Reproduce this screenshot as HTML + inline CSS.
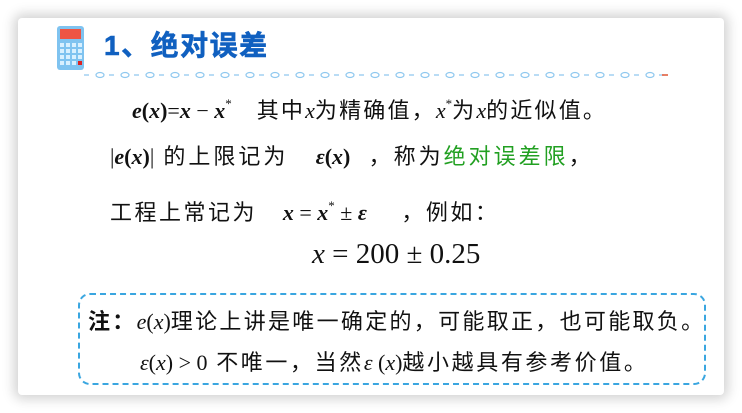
<!DOCTYPE html>
<html><head><meta charset="utf-8"><style>
body{margin:0;width:742px;height:413px;background:#fff;position:relative;overflow:hidden;font-family:"Liberation Sans","Noto Sans CJK SC",sans-serif;color:#111}
.card{position:absolute;left:18px;top:18px;width:706px;height:377px;background:#fff;border-radius:4px;box-shadow:0 0 12px 4px rgba(0,0,0,0.18)}
.a{position:absolute;white-space:nowrap;line-height:1}
.m{font-family:"Liberation Serif","Noto Serif CJK SC",serif;letter-spacing:0}
.mi{font-family:"Liberation Serif",serif;font-style:italic;letter-spacing:0}
.b{font-weight:bold}
sup{vertical-align:10px}
</style></head><body>
<div class="card"></div>
<svg class="a" style="left:56px;top:25px" width="30" height="46" viewBox="0 0 30 46">
<rect x="1" y="1" width="27" height="44" rx="3" fill="#7fc3f0"/>
<rect x="4" y="4" width="21" height="10" fill="#ee5544"/>
<g fill="#d8f0ff">
<rect x="4" y="18" width="4" height="4"/><rect x="10" y="18" width="4" height="4"/><rect x="16" y="18" width="4" height="4"/><rect x="22" y="18" width="4" height="4"/>
<rect x="4" y="24" width="4" height="4"/><rect x="10" y="24" width="4" height="4"/><rect x="16" y="24" width="4" height="4"/><rect x="22" y="24" width="4" height="4"/>
<rect x="4" y="30" width="4" height="4"/><rect x="10" y="30" width="4" height="4"/><rect x="16" y="30" width="4" height="4"/><rect x="22" y="30" width="4" height="4"/>
<rect x="4" y="36" width="4" height="4"/><rect x="10" y="36" width="4" height="4"/><rect x="16" y="36" width="4" height="4"/></g>
<rect x="22" y="36" width="4" height="4" fill="#dd2222"/>
</svg>
<div class="a b" style="left:104px;top:32px;font-size:28px;color:#1060c0;letter-spacing:1.5px;-webkit-text-stroke:0.6px #1060c0">1、绝对误差</div>
<svg class="a" style="left:84px;top:71px" width="586" height="8">
<g stroke="#8fc8ef" stroke-width="1.2" fill="none">
<line x1="0" y1="4" x2="580" y2="4" stroke-dasharray="5 20"/>
</g>
<g fill="none" stroke="#8fc8ef" stroke-width="1.2">
<ellipse cx="16" cy="4" rx="4" ry="2.5"/><ellipse cx="41" cy="4" rx="4" ry="2.5"/><ellipse cx="66" cy="4" rx="4" ry="2.5"/><ellipse cx="91" cy="4" rx="4" ry="2.5"/><ellipse cx="116" cy="4" rx="4" ry="2.5"/><ellipse cx="141" cy="4" rx="4" ry="2.5"/><ellipse cx="166" cy="4" rx="4" ry="2.5"/><ellipse cx="191" cy="4" rx="4" ry="2.5"/><ellipse cx="216" cy="4" rx="4" ry="2.5"/><ellipse cx="241" cy="4" rx="4" ry="2.5"/><ellipse cx="266" cy="4" rx="4" ry="2.5"/><ellipse cx="291" cy="4" rx="4" ry="2.5"/><ellipse cx="316" cy="4" rx="4" ry="2.5"/><ellipse cx="341" cy="4" rx="4" ry="2.5"/><ellipse cx="366" cy="4" rx="4" ry="2.5"/><ellipse cx="391" cy="4" rx="4" ry="2.5"/><ellipse cx="416" cy="4" rx="4" ry="2.5"/><ellipse cx="441" cy="4" rx="4" ry="2.5"/><ellipse cx="466" cy="4" rx="4" ry="2.5"/><ellipse cx="491" cy="4" rx="4" ry="2.5"/><ellipse cx="516" cy="4" rx="4" ry="2.5"/><ellipse cx="541" cy="4" rx="4" ry="2.5"/><ellipse cx="566" cy="4" rx="4" ry="2.5"/></g>
<line x1="578" y1="4" x2="584" y2="4" stroke="#e05533" stroke-width="1.5"/>
</svg>

<div class="a" style="left:132px;top:97px;font-size:22px;letter-spacing:2.2px"><span class="m b" style="font-style:italic">e</span><span class="m b">(</span><span class="m b" style="font-style:italic">x</span><span class="m b">)</span><span class="m">=</span><span class="m b" style="font-style:italic">x</span><span class="m"> − </span><span class="m b" style="font-style:italic">x</span><sup class="m" style="font-size:13px">*</sup>&nbsp;&nbsp; 其中<span class="mi">x</span>为精确值，<span class="mi">x</span><sup class="m" style="font-size:13px">*</sup>为<span class="mi">x</span>的近似值。</div>

<div class="a" style="left:110px;top:146px;font-size:22px;letter-spacing:3px"><span class="m">|</span><span class="m b" style="font-style:italic">e</span><span class="m b">(</span><span class="m b" style="font-style:italic">x</span><span class="m b">)</span><span class="m">|</span> 的上限记为 &nbsp;&nbsp;<span class="m b" style="font-style:italic">ε</span><span class="m b">(</span><span class="m b" style="font-style:italic">x</span><span class="m b">)</span> &nbsp;，称为<span style="color:#22a022">绝对误差限</span>，</div>

<div class="a" style="left:110px;top:199px;font-size:22px;letter-spacing:2.5px">工程上常记为 &nbsp;&nbsp;<span class="m b" style="font-style:italic">x</span><span class="m"> = </span><span class="m b" style="font-style:italic">x</span><sup class="m" style="font-size:13px">*</sup><span class="m"> ± </span><span class="m b" style="font-style:italic">ε</span> &nbsp;&nbsp; ，例如：</div>

<div class="a m" style="left:312px;top:240px;font-size:29px"><i>x</i> = 200 ± 0.25</div>

<div class="a" style="left:78px;top:293px;width:624px;height:88px;border:2px dashed #3aa6e0;border-radius:12px"></div>
<div class="a" style="left:88px;top:311px;font-size:22px;letter-spacing:2.3px"><b>注：</b><span class="mi">e</span><span class="m">(</span><span class="mi">x</span><span class="m">)</span>理论上讲是唯一确定的，可能取正，也可能取负。</div>
<div class="a" style="left:140px;top:352px;font-size:22px;letter-spacing:2.6px"><span class="mi">ε</span><span class="m">(</span><span class="mi">x</span><span class="m">) &gt; 0</span> 不唯一，当然<span class="mi">ε</span><span class="m"> (</span><span class="mi">x</span><span class="m">)</span>越小越具有参考价值。</div>
</body></html>
